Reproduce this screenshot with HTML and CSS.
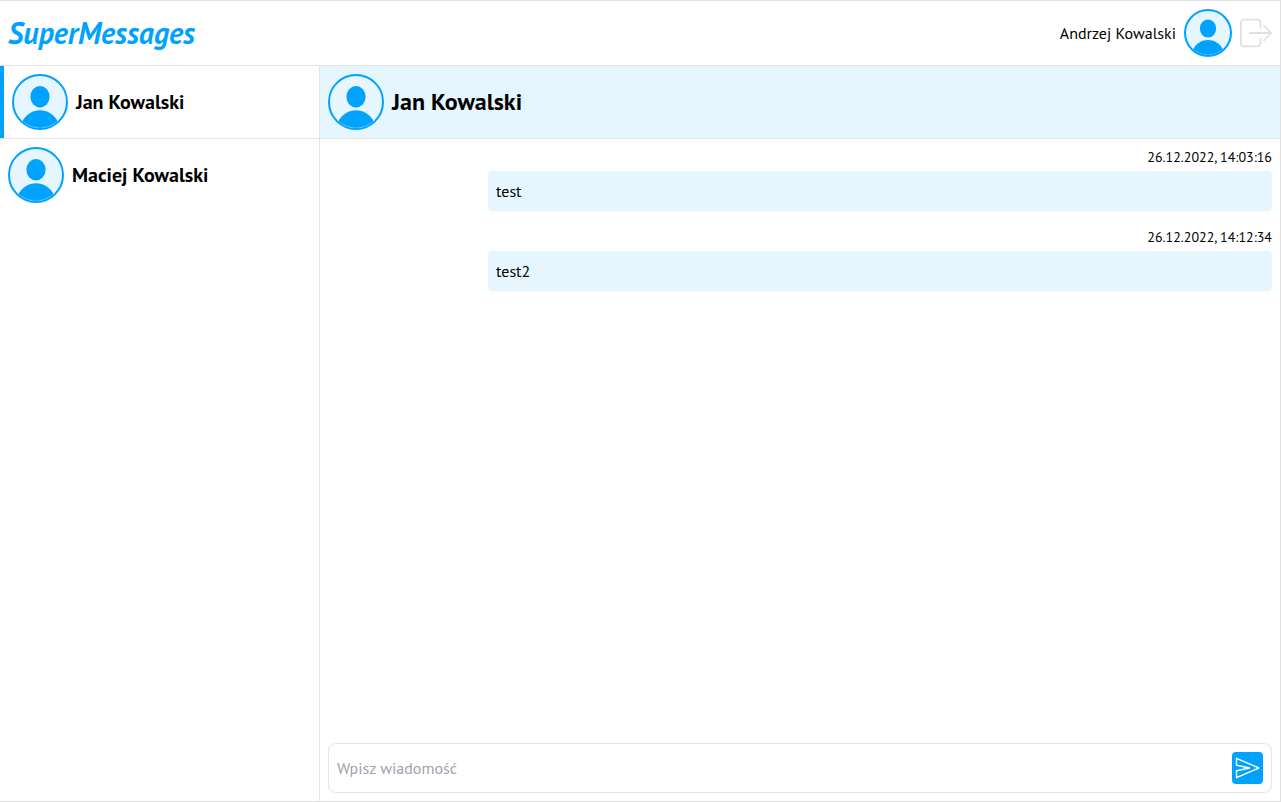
FILE: index.html
```html
<!DOCTYPE html>
<html lang="pl">
<head>
<meta charset="utf-8">
<meta name="viewport" content="width=device-width, initial-scale=1">
<title>SuperMessages</title>
<link rel="stylesheet" href="styles.css">
</head>
<body>
<svg class="symbols" aria-hidden="true">
  <symbol id="person" viewBox="2 2 52 52">
    <ellipse cx="28" cy="22.7" rx="9.6" ry="10.7"/>
    <path d="M10 48C14 40 21 36.2 28 36.2S42 40 46 48A27 27 0 0 1 10 48Z"/>
    <path class="rim" d="M12 48.5A26.2 26.2 0 0 0 44 48.5"/>
  </symbol>
</svg>
<div class="app">
  <header class="topbar">
    <h1 class="logo">SuperMessages</h1>
    <div class="account">
      <span>Andrzej Kowalski</span>
      <svg class="avatar avatar-small" aria-hidden="true"><use href="#person"/></svg>
      <button class="logout" type="button" aria-label="Wyloguj">
        <svg viewBox="0 0 32 32" aria-hidden="true"><path d="M20.5 10V5.5Q20.5 2.7 17.5 2.7H4Q.9 2.7.9 6V26Q.9 29.3 4 29.3H17.5Q20.5 29.3 20.5 26.5V22M9.5 16H31M24 8.5 31.2 16 24 23.5"/></svg>
      </button>
    </div>
  </header>
  <div class="content">
    <nav class="contacts">
      <a class="contact active" href="#jan">
        <svg class="avatar" aria-hidden="true"><use href="#person"/></svg>
        <span>Jan Kowalski</span>
      </a>
      <a class="contact" href="#maciej">
        <svg class="avatar" aria-hidden="true"><use href="#person"/></svg>
        <span>Maciej Kowalski</span>
      </a>
    </nav>
    <main class="chat">
      <div class="chat-header">
        <svg class="avatar" aria-hidden="true"><use href="#person"/></svg>
        <h2>Jan Kowalski</h2>
      </div>
      <div class="messages">
        <article class="message">
          <time>26.12.2022, 14:03:16</time>
          <p>test</p>
        </article>
        <article class="message">
          <time>26.12.2022, 14:12:34</time>
          <p>test2</p>
        </article>
      </div>
      <form class="composer">
        <input type="text" placeholder="Wpisz wiadomość" aria-label="Wpisz wiadomość">
        <button class="send" type="button" aria-label="Wyślij">
          <svg viewBox="0 0 31 32" aria-hidden="true"><path d="M4.5 6.3 26.8 16 4.5 25.7V18.8L17.5 16 4.5 13.2Z"/></svg>
        </button>
      </form>
    </main>
  </div>
</div>
</body>
</html>
```
FILE: styles.css
```css
:root {
  --blue: #00a2ff;
  --pale: #e5f6ff;
  --line: #e5e5e5;
}

* {
  box-sizing: border-box;
  margin: 0;
}

body {
  font: 16px/24px "PT Sans", "Noto Sans", sans-serif;
  color: #000;
}

button {
  padding: 0;
  border: 0;
  background: none;
  cursor: pointer;
}

.symbols {
  position: absolute;
  width: 0;
  height: 0;
}

.app {
  display: flex;
  flex-direction: column;
  height: 100vh;
  border: 1px solid #e0e0e0;
  border-left: 0;
}

.topbar {
  display: flex;
  align-items: center;
  justify-content: space-between;
  padding: 8px;
  border-bottom: 1px solid var(--line);
}

.logo {
  color: var(--blue);
  font-size: 30px;
  line-height: 36px;
  font-style: italic;
}

.account {
  display: flex;
  align-items: center;
  gap: 8px;
}

.avatar {
  flex: none;
  width: 56px;
  height: 56px;
  border: 2px solid var(--blue);
  border-radius: 50%;
  background: var(--pale);
  fill: var(--blue);
}

.avatar-small {
  width: 48px;
  height: 48px;
}

.rim {
  fill: none;
  stroke: #40b9ff;
  stroke-width: 1;
}

.logout svg {
  display: block;
  width: 32px;
  height: 32px;
  fill: none;
  stroke: #e0e0e0;
  stroke-width: 1.8;
  stroke-linecap: round;
  stroke-linejoin: round;
}

.content {
  display: flex;
  flex: 1;
  min-height: 0;
}

.contacts {
  flex: none;
  width: 320px;
  border-right: 1px solid var(--line);
}

.contact {
  display: flex;
  align-items: center;
  gap: 8px;
  padding: 8px;
  color: inherit;
  font-size: 20px;
  font-weight: 700;
  text-decoration: none;
}

.contact + .contact {
  border-top: 1px solid var(--line);
}

.active {
  border-left: 4px solid var(--blue);
}

.chat {
  display: flex;
  flex: 1;
  flex-direction: column;
  min-width: 0;
}

.chat-header {
  display: flex;
  align-items: center;
  gap: 8px;
  padding: 8px;
  border-bottom: 1px solid var(--line);
  background: var(--pale);
}

.chat-header h2 {
  font-size: 24px;
  line-height: 32px;
}

.messages {
  display: flex;
  flex: 1;
  flex-direction: column;
  gap: 16px;
  padding: 8px;
  overflow: auto;
}

.message {
  display: flex;
  flex-direction: column;
  gap: 4px;
  padding-left: 160px;
}

.message time {
  align-self: flex-end;
  font-size: 14px;
  line-height: 20px;
}

.message p {
  padding: 8px;
  border-radius: 4px;
  background: var(--pale);
}

.composer {
  display: flex;
  align-items: center;
  margin: 8px;
  padding: 8px;
  border: 1px solid var(--line);
  border-radius: 8px;
}

.composer input {
  flex: 1;
  min-width: 0;
  padding: 0;
  border: 0;
  outline: 0;
  background: none;
  font: inherit;
}

.composer input::placeholder {
  color: #9ca3af;
}

.send {
  width: 31px;
  height: 32px;
  border-radius: 4px;
  background: var(--blue);
}

.send svg {
  display: block;
  width: 31px;
  height: 32px;
  fill: none;
  stroke: #fff;
  stroke-width: 1.4;
  stroke-linejoin: round;
}
```
